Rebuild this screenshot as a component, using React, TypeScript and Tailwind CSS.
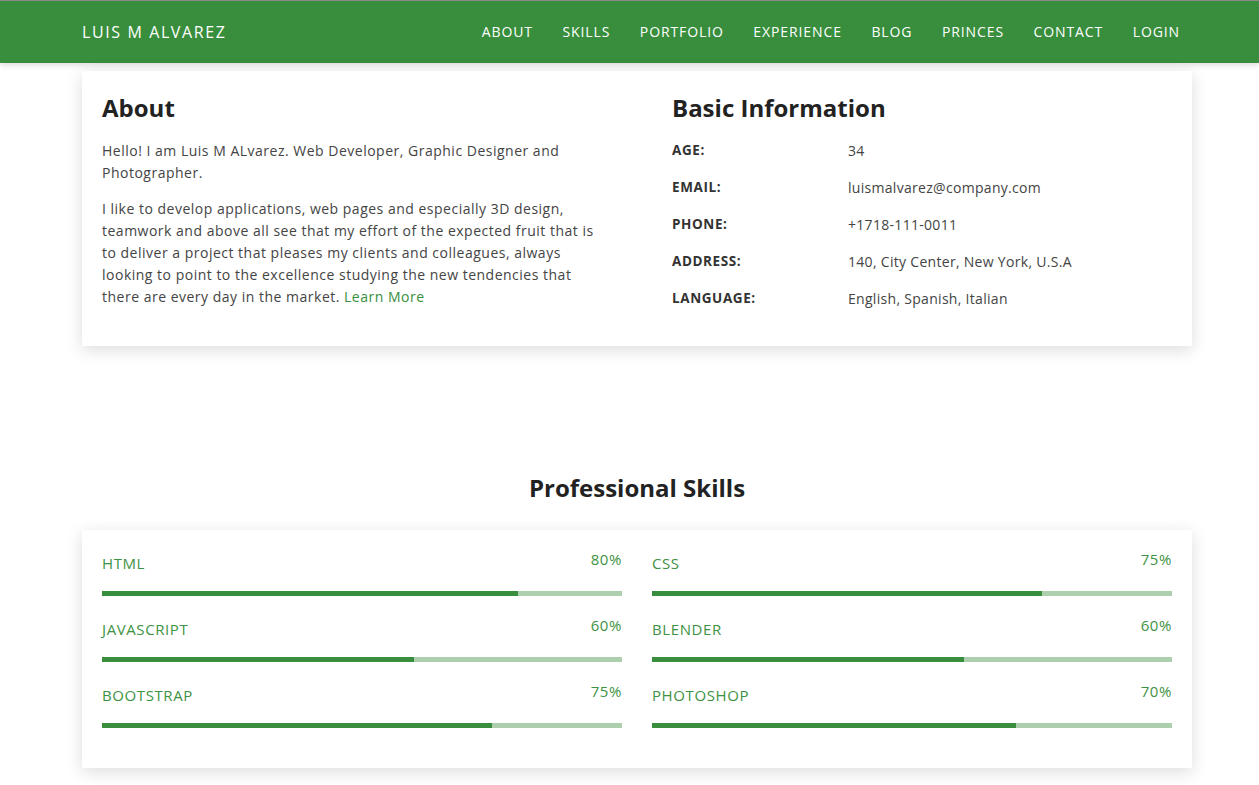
import React from "react";

const navLinks = ["ABOUT", "SKILLS", "PORTFOLIO", "EXPERIENCE", "BLOG", "PRINCES", "CONTACT", "LOGIN"];

const info = [
  ["AGE:", "34"],
  ["EMAIL:", "luismalvarez@company.com"],
  ["PHONE:", "+1718-111-0011"],
  ["ADDRESS:", "140, City Center, New York, U.S.A"],
  ["LANGUAGE:", "English, Spanish, Italian"],
];

const skillsLeft = [
  ["HTML", 80],
  ["JAVASCRIPT", 60],
  ["BOOTSTRAP", 75],
];
const skillsRight = [
  ["CSS", 75],
  ["BLENDER", 60],
  ["PHOTOSHOP", 70],
];

const SkillBar = ({ name, value }: { name: string; value: number }) => (
  <div className="h-[66px]">
    <div className="flex justify-between text-[#3e9243] tracking-[0.6px]">
      <span className="text-[15px] mt-[24px] leading-[18px]">{name}</span>
      <span className="text-[15px] mt-[20px] leading-[18px]">{value}%</span>
    </div>
    <div className="mt-[19px] h-[5px] bg-[#aecfae]">
      <div className="h-full bg-[#388e3c]" style={{ width: `${value}%` }} />
    </div>
  </div>
);

export default function App() {
  return (
    <div className="min-h-[785px] bg-white text-[#444] font-['Open_Sans',sans-serif]">
      {/* navbar */}
      <nav className="h-[63px] bg-[#388e3c] border-t border-[#8a8a8a] shadow-[0_2px_6px_rgba(0,0,0,0.15)]">
        <div className="w-[1110px] ml-[82px] h-full flex items-center justify-between pb-[1px]">
          <span className="text-white text-[16px] tracking-[1.6px]">LUIS M ALVAREZ</span>
          <ul className="flex gap-[29.5px] mr-[12px]">
            {navLinks.map((l) => (
              <li key={l} className="text-white text-[14px] tracking-[0.9px]">
                {l}
              </li>
            ))}
          </ul>
        </div>
      </nav>

      <div className="w-[1110px] ml-[82px]">
        {/* about card */}
        <div className="mt-[8px] bg-white shadow-[0_4px_16px_rgba(0,0,0,0.14)] px-[20px] pt-[20px] pb-[29px] flex">
          <div className="w-[505px] tracking-[0.5px]">
            <h2 className="text-[24px] font-bold text-[#222] leading-[34px] tracking-normal">About</h2>
            <p className="mt-[15px] text-[14px] leading-[22px]">
              Hello! I am Luis M ALvarez. Web Developer, Graphic Designer and Photographer.
            </p>
            <p className="mt-[14px] text-[14px] leading-[22px]">
              I like to develop applications, web pages and especially 3D design, teamwork and above all see that my
              effort of the expected fruit that is to deliver a project that pleases my clients and colleagues, always
              looking to point to the excellence studying the new tendencies that there are every day in the market.{" "}
              <a className="text-[#388e3c]">Learn More</a>
            </p>
          </div>
          <div className="ml-[65px] flex-1">
            <h2 className="text-[24px] font-bold text-[#222] leading-[34px]">Basic Information</h2>
            <div className="mt-[7px]">
              {info.map(([k, v]) => (
                <div key={k} className="flex h-[37px] items-center">
                  <span className="w-[176px] text-[13.5px] font-bold text-[#333] tracking-[0.6px]">{k}</span>
                  <span className="text-[14px] tracking-[0.3px]">{v}</span>
                </div>
              ))}
            </div>
          </div>
        </div>

        {/* skills */}
        <h2 className="mt-[125px] text-center text-[24px] font-bold text-[#222] leading-[34px]">Professional Skills</h2>
        <div className="mt-[25px] bg-white shadow-[0_4px_16px_rgba(0,0,0,0.14)] px-[20px] pb-[40px] grid grid-cols-2 gap-[30px]">
          <div>
            {skillsLeft.map(([n, v]) => (
              <SkillBar key={n as string} name={n as string} value={v as number} />
            ))}
          </div>
          <div>
            {skillsRight.map(([n, v]) => (
              <SkillBar key={n as string} name={n as string} value={v as number} />
            ))}
          </div>
        </div>
      </div>
    </div>
  );
}
